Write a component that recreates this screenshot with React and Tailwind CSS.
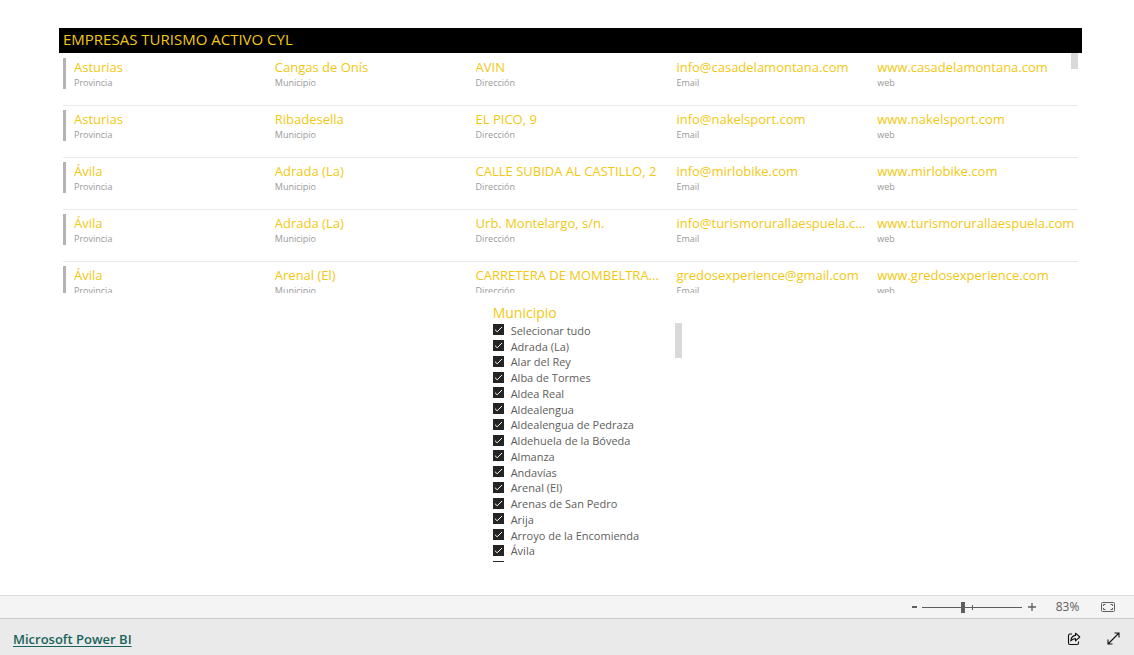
import React, { useState } from 'react';

const companies = [
  { provincia: 'Asturias', municipio: 'Cangas de Onís', direccion: 'AVIN', email: 'info@casadelamontana.com', web: 'www.casadelamontana.com' },
  { provincia: 'Asturias', municipio: 'Ribadesella', direccion: 'EL PICO, 9', email: 'info@nakelsport.com', web: 'www.nakelsport.com' },
  { provincia: 'Ávila', municipio: 'Adrada (La)', direccion: 'CALLE SUBIDA AL CASTILLO, 2', email: 'info@mirlobike.com', web: 'www.mirlobike.com' },
  { provincia: 'Ávila', municipio: 'Adrada (La)', direccion: 'Urb. Montelargo, s/n.', email: 'info@turismorurallaespuela.c...', web: 'www.turismorurallaespuela.com' },
  { provincia: 'Ávila', municipio: 'Arenal (El)', direccion: 'CARRETERA DE MOMBELTRA...', email: 'gredosexperience@gmail.com', web: 'www.gredosexperience.com' },
];

const fields = [
  { key: 'provincia', label: 'Provincia' },
  { key: 'municipio', label: 'Municipio' },
  { key: 'direccion', label: 'Dirección' },
  { key: 'email', label: 'Email' },
  { key: 'web', label: 'web' },
];

const towns = [
  'Adrada (La)',
  'Alar del Rey',
  'Alba de Tormes',
  'Aldea Real',
  'Aldealengua',
  'Aldealengua de Pedraza',
  'Aldehuela de la Bóveda',
  'Almanza',
  'Andavías',
  'Arenal (El)',
  'Arenas de San Pedro',
  'Arija',
  'Arroyo de la Encomienda',
  'Ávila',
  'Barraco (El)',
];

const CompanyCard = ({ company }) => (
  <li className="h-[52px] border-b border-[#eaeaea] pt-1">
    <dl className="grid grid-cols-5 h-[31px] border-l-3 border-[#b3b3b3] pl-2">
      {fields.map(({ key, label }) => (
        <div key={key} className="flex flex-col-reverse justify-end min-w-0">
          <dt className="text-[9px] leading-3 text-[#999999]">{label}</dt>
          <dd className="text-[13px] leading-[19px] text-[#f2c811] truncate">{company[key]}</dd>
        </div>
      ))}
    </dl>
  </li>
);

const SlicerItem = ({ label, checked, onChange }) => (
  <li className="flex-1 min-h-0">
    <label className="flex items-center gap-[7px] h-full text-[11px] leading-4 text-[#605e5c] whitespace-nowrap">
      <span className="grid shrink-0 mb-0.5">
        <input
          type="checkbox"
          checked={checked}
          onChange={onChange}
          className="col-start-1 row-start-1 appearance-none size-[11px] border border-[#252423] checked:bg-[#252423]"
        />
        {checked && (
          <svg viewBox="0 0 11 11" className="col-start-1 row-start-1 size-[11px] pointer-events-none" fill="none" stroke="#fff" strokeWidth="1">
            <path d="M2 5.7 4.2 7.8 9 3" />
          </svg>
        )}
      </span>
      {label}
    </label>
  </li>
);

const Slicer = () => {
  const [selected, setSelected] = useState(towns);
  const allSelected = selected.length === towns.length;

  const toggle = (town) =>
    setSelected((prev) => (prev.includes(town) ? prev.filter((t) => t !== town) : [...prev, town]));

  return (
    <section className="ml-[42%] mt-2.5 w-[193px] pl-1">
      <h2 className="text-sm leading-5 text-[#f2c811]">Municipio</h2>
      <div className="flex justify-between items-start h-[239px] overflow-hidden">
        <ul className="flex flex-col h-[252px]">
          <SlicerItem label="Selecionar tudo" checked={allSelected} onChange={() => setSelected(allSelected ? [] : towns)} />
          {towns.map((town) => (
            <SlicerItem key={town} label={town} checked={selected.includes(town)} onChange={() => toggle(town)} />
          ))}
        </ul>
        <div className="w-[7px] h-[35px] bg-[#d9d9d9]" />
      </div>
    </section>
  );
};

const ZoomBar = () => {
  const [zoom, setZoom] = useState(83);

  return (
    <div className="flex items-center justify-end h-[23px] pr-[19px] bg-[#f4f4f4] border-t border-[#dddddd] text-[#605e5c]">
      <button aria-label="Alejar" onClick={() => setZoom(Math.max(10, zoom - 10))} className="p-[5px]">
        <svg viewBox="0 0 5 11" className="w-[5px] h-[11px]" fill="currentColor"><path d="M0 4h5v2H0z" /></svg>
      </button>
      <div className="relative flex items-center w-[100px] h-[11px]">
        <input
          type="range"
          min="10"
          max="190"
          value={zoom}
          onChange={(e) => setZoom(Number(e.target.value))}
          aria-label="Zoom"
          className="appearance-none w-full h-[11px] bg-transparent [&::-webkit-slider-runnable-track]:h-px [&::-webkit-slider-runnable-track]:bg-[#605e5c] [&::-webkit-slider-thumb]:appearance-none [&::-webkit-slider-thumb]:w-1 [&::-webkit-slider-thumb]:h-[11px] [&::-webkit-slider-thumb]:-mt-[5px] [&::-webkit-slider-thumb]:bg-[#605e5c]"
        />
        <span className="absolute left-1/2 top-[3px] w-px h-[5px] bg-[#605e5c]" />
      </div>
      <button aria-label="Acercar" onClick={() => setZoom(Math.min(190, zoom + 10))} className="p-1.5">
        <svg viewBox="0 0 8 8" className="size-2" fill="none" stroke="currentColor" strokeWidth="1.3"><path d="M0 4h8M4 0v8" /></svg>
      </button>
      <span className="w-[59px] pr-2 text-center text-xs">{zoom}%</span>
      <button aria-label="Ajustar a la página">
        <svg viewBox="0 0 14 10" className="w-3.5 h-2.5" fill="none" stroke="currentColor" strokeWidth="1">
          <rect x=".5" y=".5" width="13" height="9" rx="1" />
          <path d="M4.500 2.500h-2V4M2.500 6v1.500h2M9.500 2.500h2V4M11.500 6v1.500h-2" />
        </svg>
      </button>
    </div>
  );
};

const Footer = () => (
  <footer className="flex items-center justify-between h-[37px] pl-[13px] pr-3.5 pt-[3px] bg-[#eaeaea] border-t border-[#c8c8c8]">
    <a href="https://powerbi.microsoft.com" className="text-[13px] leading-5 font-semibold text-[#19645c] underline underline-offset-2">
      Microsoft Power BI
    </a>
    <div className="flex items-center gap-[26px] text-[#111111]">
      <button aria-label="Compartir">
        <svg viewBox="0 0 14 14" className="size-3.5" fill="none" stroke="currentColor" strokeWidth="1.1" strokeLinejoin="round">
          <path d="M5 2H3Q1.500 2 1.500 3.500v7.500Q1.500 12.500 3 12.500h7q1.500 0 1.500-1.500V9.500" />
          <path d="M8.500 1.200 12.800 5 8.500 8.800V6.600Q5.500 6.600 3.800 9 4.200 3.800 8.500 3.400Z" />
        </svg>
      </button>
      <button aria-label="Pantalla completa">
        <svg viewBox="0 0 13 13" className="size-[13px]" fill="none" stroke="currentColor" strokeWidth="1.1">
          <path d="M1 12 12 1M7.500 1H12v4.500M1 7.500V12h4.500" />
        </svg>
      </button>
    </div>
  </footer>
);

export default function App() {
  return (
    <div className="flex flex-col min-h-screen bg-white font-['Open_Sans',sans-serif]">
      <main className="flex-1 pt-7 pl-[59px] pr-[52px]">
        <h1 className="h-[25px] pl-1 bg-black text-[15px] leading-[23px] text-[#f2c811]">EMPRESAS TURISMO ACTIVO CYL</h1>

        {/* Company list, the last card is cut by the visual's edge */}
        <section className="relative h-[240px] pt-px pl-1 pr-1 overflow-hidden">
          <ul>
            {companies.map((company) => (
              <CompanyCard key={company.web} company={company} />
            ))}
          </ul>
          <div className="absolute right-1 top-0 w-[7px] h-4 bg-[#d9d9d9]" />
        </section>

        <Slicer />
      </main>

      <ZoomBar />
      <Footer />
    </div>
  );
}
